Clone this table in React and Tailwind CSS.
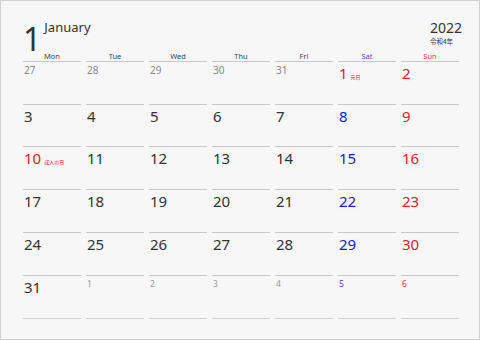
import React from "react";

const days = ["Mon", "Tue", "Wed", "Thu", "Fri", "Sat", "Sun"];

const weeks = [
  [
    { d: 27, o: true }, { d: 28, o: true }, { d: 29, o: true }, { d: 30, o: true }, { d: 31, o: true },
    { d: 1, h: "元日" }, { d: 2 },
  ],
  [{ d: 3 }, { d: 4 }, { d: 5 }, { d: 6 }, { d: 7 }, { d: 8 }, { d: 9 }],
  [{ d: 10, h: "成人の日" }, { d: 11 }, { d: 12 }, { d: 13 }, { d: 14 }, { d: 15 }, { d: 16 }],
  [{ d: 17 }, { d: 18 }, { d: 19 }, { d: 20 }, { d: 21 }, { d: 22 }, { d: 23 }],
  [{ d: 24 }, { d: 25 }, { d: 26 }, { d: 27 }, { d: 28 }, { d: 29 }, { d: 30 }],
  [
    { d: 31 }, { d: 1, o: true, s: true }, { d: 2, o: true, s: true }, { d: 3, o: true, s: true },
    { d: 4, o: true, s: true }, { d: 5, o: true, s: true }, { d: 6, o: true, s: true },
  ],
];

const rowHeights = ["h-[43px]", "h-[42px]", "h-[43px]", "h-[43px]", "h-[43px]", "h-[43px]"];

function Cell({ c, col }) {
  let color = "text-[#333333]";
  if (c.h || col === 6) color = "text-[#e8202a]";
  else if (col === 5) color = "text-[#1a1ae0]";
  let size = "text-[15px]";
  if (c.o && !c.s) {
    size = "text-[10px]";
    if (!(col === 5 || col === 6)) color = "text-[#8a8a8a]";
  }
  if (c.s) {
    size = "text-[8.5px]";
    if (col === 5) color = "text-[#3b3be0]";
    else if (col === 6) color = "text-[#f04048]";
    else color = "text-[#999999]";
  }
  return (
    <div className="border-t border-[#c9c9c9] pl-[1px]">
      <div className={`flex items-baseline leading-none ${c.o && !c.s ? "pt-[3px]" : "pt-[4px]"}`}>
        <span className={`${size} ${color} leading-none`}>{c.d}</span>
        {c.h && (
          <span className="ml-[3px] text-[5px] text-[#e8202a] leading-none font-['Noto_Sans_CJK_JP',sans-serif]">
            {c.h}
          </span>
        )}
      </div>
    </div>
  );
}

export default function App() {
  return (
    <div className="w-[480px] h-[340px] bg-[#f7f7f7] border border-[#d2d2d2] font-['Noto_Sans','Noto_Sans_CJK_JP',sans-serif] overflow-hidden">
      <div className="flex justify-between pl-[22px] pr-[17px] h-[50px]">
        <div className="flex items-start pt-[22px]">
          <span className="text-[32px] leading-none text-[#333333]">1</span>
          <span className="text-[13px] leading-none text-[#333333] ml-[3px] -mt-[2px]">January</span>
        </div>
        <div className="flex flex-col items-start pt-[20px]">
          <span className="text-[14px] leading-none text-[#333333]">2022</span>
          <span className="text-[6.5px] leading-none text-[#333333] font-['Noto_Sans_CJK_JP',sans-serif] mt-[3px]">令和4年</span>
        </div>
      </div>
      <div className="pl-[22px] pr-[20px]">
        <div className="grid grid-cols-7 gap-x-[5px] h-[10px]">
          {days.map((d, i) => (
            <div
              key={d}
              className={`text-center text-[7.5px] leading-[10px] ${
                i === 5 ? "text-[#4b4be6]" : i === 6 ? "text-[#f04048]" : "text-[#444444]"
              }`}
            >
              {d}
            </div>
          ))}
        </div>
        {weeks.map((w, r) => (
          <div key={r} className={`grid grid-cols-7 gap-x-[5px] ${rowHeights[r]}`}>
            {w.map((c, i) => (
              <Cell key={i} c={c} col={i} />
            ))}
          </div>
        ))}
        <div className="grid grid-cols-7 gap-x-[5px]">
          {days.map((d) => (
            <div key={d} className="border-t border-[#cfcfcf]" />
          ))}
        </div>
      </div>
    </div>
  );
}
